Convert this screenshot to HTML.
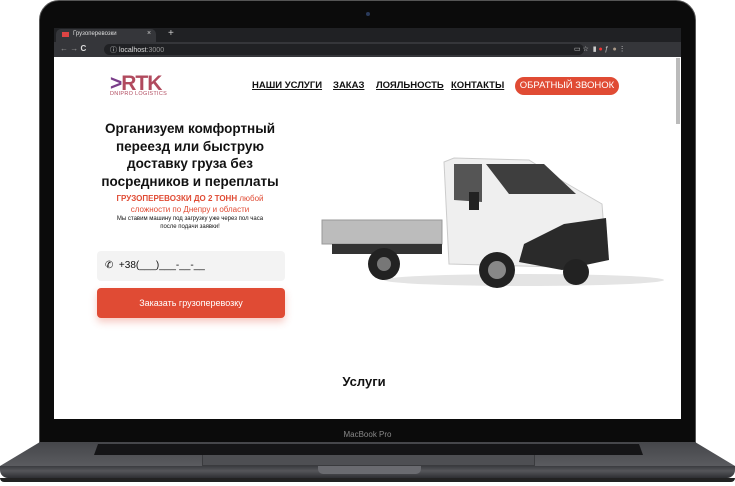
<!DOCTYPE html>
<html><head><meta charset="utf-8"><style>
*{margin:0;padding:0;box-sizing:border-box}
body{width:735px;height:486px;background:#fff;position:relative;overflow:hidden;font-family:"Liberation Sans",sans-serif}
.a{position:absolute}
.nav{font-size:9.5px;font-weight:bold;text-decoration:underline;color:#111;top:52px;white-space:nowrap}
</style></head><body>
<div class="a" style="left:39px;top:0;width:657px;height:444px;background:#0b0b0b;border-radius:20px 20px 0 0;border:1px solid #555"></div>
<div class="a" style="left:366px;top:12px;width:4px;height:4px;border-radius:50%;background:#2a3a5a"></div>
<div class="a" style="left:0;top:442px;width:735px;height:24px;background:linear-gradient(#45464a,#5a5b5f);clip-path:polygon(40px 0,695px 0,735px 24px,0 24px)"></div>
<div class="a" style="left:94px;top:444px;width:549px;height:11px;background:#151517;clip-path:polygon(4px 0,545px 0,549px 11px,0 11px)"></div>
<div class="a" style="left:202px;top:455px;width:333px;height:11px;background:#4e4f53;border:1px solid #3a3b3e;border-top:none"></div>
<div class="a" style="left:0;top:466px;width:735px;height:12px;background:linear-gradient(#3a3b3f,#55565a 40%,#2e2f33);border-radius:0 0 8px 8px"></div>
<div class="a" style="left:318px;top:466px;width:103px;height:8px;background:#6a6b70;border-radius:0 0 5px 5px"></div>
<div class="a" style="left:0;top:478px;width:735px;height:4px;background:#222;border-radius:0 0 20px 20px"></div>
<div class="a" style="left:0;top:430px;width:735px;text-align:center;color:#888;font-size:8px">MacBook Pro</div>
<div class="a" style="left:54px;top:28px;width:627px;height:391px;background:#fff;overflow:hidden">
 <div class="a" style="left:0;top:0;width:627px;height:14px;background:#202124"></div>
 <div class="a" style="left:2px;top:1px;width:100px;height:13px;background:#35363a;border-radius:5px 5px 0 0"></div>
 <div class="a" style="left:8px;top:4px;width:7px;height:5px;background:#d44"></div>
 <div class="a" style="left:19px;top:3px;color:#ddd;font-size:6px">Грузоперевозки</div>
 <div class="a" style="left:93px;top:2px;color:#ccc;font-size:7px">×</div>
 <div class="a" style="left:114px;top:0;color:#ccc;font-size:10px">+</div>
 <div class="a" style="left:0;top:14px;width:627px;height:15px;background:#35363a"></div>
 <div class="a" style="left:6px;top:16px;color:#999;font-size:8px">← → <b style="color:#ddd">C</b></div>
 <div class="a" style="left:50px;top:16px;width:480px;height:11px;background:#202124;border-radius:6px"></div>
 <div class="a" style="left:56px;top:17px;color:#ddd;font-size:7px">ⓘ localhost<span style="color:#999">:3000</span></div>
 <div class="a" style="left:520px;top:17px;color:#ccc;font-size:7px;white-space:nowrap">▭ ☆ &nbsp;▮ <span style="color:#e33">●</span> ƒ &nbsp;<span style="color:#a98">●</span> ⋮</div>
 <div class="a" style="left:622px;top:30px;width:4px;height:66px;background:#bbb"></div>
 <div class="a" style="left:56px;top:44px;font-size:21px;font-weight:bold;color:#b14a5e;letter-spacing:-1px"><span style="color:#7a3e8a">&gt;</span>RTK</div>
 <div class="a" style="left:56px;top:63px;font-size:5.5px;color:#b14a5e;letter-spacing:.3px;white-space:nowrap">DNIPRO LOGISTICS</div>
 <div class="a nav" style="left:198px">НАШИ УСЛУГИ</div>
 <div class="a nav" style="left:279px">ЗАКАЗ</div>
 <div class="a nav" style="left:322px">ЛОЯЛЬНОСТЬ</div>
 <div class="a nav" style="left:397px">КОНТАКТЫ</div>
 <div class="a" style="left:461px;top:49px;width:104px;height:18px;background:#e04b34;border-radius:9px;color:#fff;font-size:9.5px;text-align:center;line-height:18px;white-space:nowrap">ОБРАТНЫЙ ЗВОНОК</div>
 <div class="a" style="left:30px;top:92px;width:212px;text-align:center;font-size:13.5px;font-weight:bold;line-height:17.5px;color:#111">Организуем комфортный переезд или быструю доставку груза без посредников и переплаты</div>
 <div class="a" style="left:46px;top:165px;width:180px;text-align:center;font-size:8px;line-height:11px;color:#e04b34"><b>ГРУЗОПЕРЕВОЗКИ ДО 2 ТОНН</b> любой сложности по Днепру и области</div>
 <div class="a" style="left:56px;top:187px;width:160px;text-align:center;font-size:6px;line-height:8px;color:#111">Мы ставим машину под загрузку уже через пол часа после подачи заявки!</div>
 <div class="a" style="left:43px;top:223px;width:188px;height:30px;background:#f3f3f3;border-radius:4px"></div>
 <div class="a" style="left:51px;top:232px;font-size:10px;color:#111">✆ &nbsp;+38(___)___-__-__</div>
 <div class="a" style="left:43px;top:260px;width:188px;height:30px;background:#e04b34;border-radius:4px;box-shadow:0 4px 8px rgba(224,75,52,.3);color:#fff;font-size:9px;text-align:center;line-height:30px">Заказать грузоперевозку</div>
 <div class="a" style="left:0;top:346px;width:620px;text-align:center;font-size:13px;font-weight:bold;color:#111">Услуги</div>
 <svg class="a" style="left:260px;top:124px" width="350" height="145" viewBox="0 0 350 145">
  <ellipse cx="210" cy="128" rx="140" ry="6" fill="#e4e4e4"/>
  <rect x="8" y="68" width="120" height="24" fill="#bcbcbc" stroke="#999"/>
  <rect x="18" y="92" width="110" height="10" fill="#333"/>
  <path d="M130 10 L140 6 L215 8 L250 30 L288 52 L292 105 L245 115 L135 112 Z" fill="#efefef" stroke="#ccc"/>
  <path d="M140 12 L168 12 L168 50 L140 48 Z" fill="#555"/>
  <path d="M172 12 L230 12 L262 42 L195 42 Z" fill="#3e3e3e"/>
  <path d="M250 72 L292 66 L295 108 L248 118 L205 110 L210 92 Z" fill="#2a2a2a"/>
  <rect x="155" y="40" width="10" height="18" fill="#222"/>
  <circle cx="70" cy="112" r="16" fill="#222"/><circle cx="70" cy="112" r="7" fill="#777"/>
  <circle cx="183" cy="118" r="18" fill="#222"/><circle cx="183" cy="118" r="9" fill="#888"/>
  <circle cx="262" cy="120" r="13" fill="#222"/>
 </svg>
</div>
</body></html>
